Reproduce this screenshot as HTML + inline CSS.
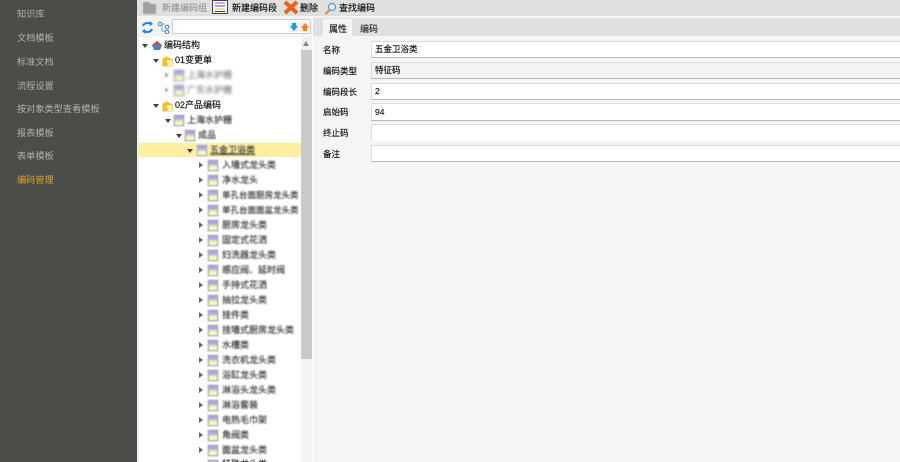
<!DOCTYPE html>
<html><head><meta charset="utf-8">
<style>
html,body{margin:0;padding:0;width:900px;height:462px;overflow:hidden;background:#f5f5f5}
body{position:relative;font-family:"Liberation Sans","Noto Sans CJK SC",sans-serif;font-size:9px;color:#111}
.a{position:absolute}
.t{position:absolute;white-space:nowrap;line-height:12px;-webkit-text-stroke:.15px currentColor}
.s{position:absolute;left:17px;color:#b0b1ac;font-size:9.2px;line-height:12px;white-space:nowrap;filter:blur(.3px)}
.ic{position:absolute;width:10px;height:11px;background:linear-gradient(#b890ec 0,#a8b4f4 35%,#f8f4a0 60%,#fbfbd8 100%);border:1px solid #aaa;box-sizing:border-box;outline:1px solid #e4e4e4;filter:blur(.6px)}
.ar{position:absolute;width:0;height:0;border-left:4px solid #666;border-top:3px solid transparent;border-bottom:3px solid transparent;filter:blur(.3px)}
.ad{position:absolute;width:0;height:0;border-top:4px solid #444;border-left:3px solid transparent;border-right:3px solid transparent;filter:blur(.2px)}
.m{color:#333;filter:blur(.7px)}
.f{position:absolute;left:371px;width:540px;height:17px;background:#fff;border:1px solid #dcdcdc;border-bottom:1px solid #b8b8b8;box-sizing:border-box;padding-left:3px;line-height:15px;font-size:8.5px;-webkit-text-stroke:.15px #111}
.l{position:absolute;left:323px;font-size:8.5px;line-height:12px;white-space:nowrap;-webkit-text-stroke:.15px #111}
</style></head><body>
<div class="a" style="left:0;top:0;width:137px;height:462px;background:#4b4d48"></div>
<div class="s" style="top:8px">知识库</div>
<div class="s" style="top:32px">文档模板</div>
<div class="s" style="top:56px">标准文档</div>
<div class="s" style="top:80px">流程设置</div>
<div class="s" style="top:103px">按对象类型查看模板</div>
<div class="s" style="top:127px">报表模板</div>
<div class="s" style="top:150px">表单模板</div>
<div class="s" style="top:174px;color:#d9a528">编码管理</div>

<div class="a" style="left:137px;top:0;width:763px;height:16px;background:#e0e0e0"></div>
<div class="a" style="left:137px;top:16px;width:763px;height:2px;background:#f4f4f4"></div>
<svg class="a" style="left:142px;top:1px;filter:blur(.5px)" width="16" height="14"><path d="M1 1h6l2 2h5v10H1z" fill="#a0a0a0"/></svg>
<div class="t" style="left:162px;top:2px;color:#9a9a9a;filter:blur(.3px)">新建编码组</div>
<svg class="a" style="left:212px;top:0" width="17" height="15"><rect x=".5" y=".5" width="15" height="13" fill="#fff" stroke="#444"/><path d="M3 3h10" stroke="#c040c0"/><path d="M3 6h10" stroke="#3050d0"/><path d="M3 9h10" stroke="#e0c020"/><path d="M3 11.500h10" stroke="#444"/></svg>
<div class="t" style="left:232px;top:2px">新建编码段</div>
<svg class="a" style="left:283px;top:0" width="16" height="15"><path d="M2 2L14 13M14 2L2 13" stroke="#e8641c" stroke-width="4"/></svg>
<div class="t" style="left:300px;top:2px">删除</div>
<svg class="a" style="left:324px;top:2px" width="13" height="13"><circle cx="8" cy="5" r="3.500" fill="#d8eefa" stroke="#4a90c0"/><path d="M5.500 8L1.500 12" stroke="#d89040" stroke-width="2"/></svg>
<div class="t" style="left:339px;top:2px">查找编码</div>

<div class="a" style="left:137px;top:18px;width:2px;height:444px;background:#f0f0f0"></div>
<div class="a" style="left:139px;top:18px;width:173px;height:19px;background:#f4f4f4"></div>
<svg class="a" style="left:141px;top:21px" width="13" height="13"><path d="M2 5C3 2 7 1 10 3M11 8C10 11 6 12 3 10" fill="none" stroke="#2080e0" stroke-width="2"/><path d="M9 0l3 3-3 2zM4 13l-3-3 3-2z" fill="#2080e0"/></svg>
<svg class="a" style="left:157px;top:21px" width="13" height="13"><circle cx="3" cy="3" r="1.800" fill="#fff" stroke="#3080c0"/><circle cx="10" cy="6" r="1.800" fill="#fff" stroke="#3080c0"/><circle cx="10" cy="11" r="1.800" fill="#fff" stroke="#3080c0"/><path d="M4 3h4M5 3v7h3" fill="none" stroke="#80a0c0"/></svg>
<div class="a" style="left:172px;top:19px;width:139px;height:15px;background:#fff;border:1px solid #ccc;border-radius:2px;box-sizing:border-box"></div>
<svg class="a" style="left:289px;top:22px" width="10" height="10"><rect width="10" height="10" fill="#e8f0f6"/><path d="M3 1h4v3h2L5 9 1 4h2z" fill="#1c9ae0"/></svg>
<svg class="a" style="left:300px;top:22px" width="10" height="10"><rect width="10" height="10" fill="#f8eee4"/><path d="M3 9h4V6h2L5 1 1 6h2z" fill="#f08020"/></svg>

<div class="a" style="left:139px;top:37px;width:162px;height:425px;background:#fff"></div>
<div class="a" style="left:301px;top:37px;width:11px;height:322px;background:#c9c9c9"></div>
<div class="a" style="left:301px;top:37px;width:11px;height:13px;background:#f0f0f0"></div>
<div class="a" style="left:303px;top:41px;width:0;height:0;border-bottom:5px solid #888;border-left:3px solid transparent;border-right:3px solid transparent"></div>
<div class="a" style="left:301px;top:359px;width:11px;height:103px;background:#f7f2f7"></div>
<div class="a" style="left:139px;top:143px;width:162px;height:14px;background:#fdeea0"></div>

<div class="ad" style="left:142px;top:44px"></div>
<svg class="a" style="left:151px;top:40px" width="12" height="11"><path d="M6 1l5 4-2 5H3L1 5z" fill="#4a80c0"/><path d="M6 1l5 4H1z" fill="#d05030"/></svg>
<div class="t" style="left:164px;top:39px">编码结构</div>
<div class="ad" style="left:153px;top:59px"></div>
<svg class="a" style="left:162px;top:55px" width="12" height="12"><path d="M1 3l4-2 3 2v1H1z" fill="#f6d050"/><path d="M1 4h9l1 7H1z" fill="#f6c428" stroke="#d89a10" stroke-width=".6"/><path d="M5 5h5l1 6H6z" fill="#fff2a8"/></svg>
<div class="t" style="left:175px;top:54px">01变更单</div>
<div class="ar" style="left:165px;top:72px;border-left-color:#bbb"></div>
<div class="ic" style="left:174px;top:70px;filter:blur(1px)"></div>
<div class="t" style="left:187px;top:69px;color:#888;filter:blur(1.2px)">上海水护栅</div>
<div class="ar" style="left:165px;top:87px;border-left-color:#bbb"></div>
<div class="ic" style="left:174px;top:85px;filter:blur(1px)"></div>
<div class="t" style="left:187px;top:84px;color:#888;filter:blur(1.2px)">广东水护栅</div>
<div class="ad" style="left:153px;top:104px"></div>
<svg class="a" style="left:162px;top:100px" width="12" height="12"><path d="M1 3l4-2 3 2v1H1z" fill="#f6d050"/><path d="M1 4h9l1 7H1z" fill="#f6c428" stroke="#d89a10" stroke-width=".6"/><path d="M5 5h5l1 6H6z" fill="#fff2a8"/></svg>
<div class="t" style="left:175px;top:99px">02产品编码</div>
<div class="ad" style="left:165px;top:119px"></div>
<div class="ic" style="left:174px;top:115px"></div>
<div class="t m" style="left:187px;top:114px">上海水护栅</div>
<div class="ad" style="left:176px;top:134px"></div>
<div class="ic" style="left:185px;top:130px"></div>
<div class="t m" style="left:198px;top:129px">成品</div>
<div class="ad" style="left:187px;top:149px"></div>
<div class="ic" style="left:197px;top:145px"></div>
<div class="t m" style="left:210px;top:144px;text-decoration:underline">五金卫浴类</div>

<div class="ar" style="left:199px;top:162px"></div><div class="ic" style="left:208px;top:160px"></div><div class="t m" style="left:222px;top:159px">入墙式龙头类</div>
<div class="ar" style="left:199px;top:177px"></div><div class="ic" style="left:208px;top:175px"></div><div class="t m" style="left:222px;top:174px">净水龙头</div>
<div class="ar" style="left:199px;top:192px"></div><div class="ic" style="left:208px;top:190px"></div><div class="t m" style="left:222px;top:189px;font-size:8.500px">单孔台面厨房龙头类</div>
<div class="ar" style="left:199px;top:207px"></div><div class="ic" style="left:208px;top:205px"></div><div class="t m" style="left:222px;top:204px;font-size:8.500px">单孔台面面盆龙头类</div>
<div class="ar" style="left:199px;top:222px"></div><div class="ic" style="left:208px;top:220px"></div><div class="t m" style="left:222px;top:219px">厨房龙头类</div>
<div class="ar" style="left:199px;top:237px"></div><div class="ic" style="left:208px;top:235px"></div><div class="t m" style="left:222px;top:234px">固定式花洒</div>
<div class="ar" style="left:199px;top:252px"></div><div class="ic" style="left:208px;top:250px"></div><div class="t m" style="left:222px;top:249px">妇洗器龙头类</div>
<div class="ar" style="left:199px;top:267px"></div><div class="ic" style="left:208px;top:265px"></div><div class="t m" style="left:222px;top:264px">感应阀、延时阀</div>
<div class="ar" style="left:199px;top:282px"></div><div class="ic" style="left:208px;top:280px"></div><div class="t m" style="left:222px;top:279px">手持式花洒</div>
<div class="ar" style="left:199px;top:297px"></div><div class="ic" style="left:208px;top:295px"></div><div class="t m" style="left:222px;top:294px">抽拉龙头类</div>
<div class="ar" style="left:199px;top:312px"></div><div class="ic" style="left:208px;top:310px"></div><div class="t m" style="left:222px;top:309px">挂件类</div>
<div class="ar" style="left:199px;top:327px"></div><div class="ic" style="left:208px;top:325px"></div><div class="t m" style="left:222px;top:324px">挂墙式厨房龙头类</div>
<div class="ar" style="left:199px;top:342px"></div><div class="ic" style="left:208px;top:340px"></div><div class="t m" style="left:222px;top:339px">水槽类</div>
<div class="ar" style="left:199px;top:357px"></div><div class="ic" style="left:208px;top:355px"></div><div class="t m" style="left:222px;top:354px">洗衣机龙头类</div>
<div class="ar" style="left:199px;top:372px"></div><div class="ic" style="left:208px;top:370px"></div><div class="t m" style="left:222px;top:369px">浴缸龙头类</div>
<div class="ar" style="left:199px;top:387px"></div><div class="ic" style="left:208px;top:385px"></div><div class="t m" style="left:222px;top:384px">淋浴头龙头类</div>
<div class="ar" style="left:199px;top:402px"></div><div class="ic" style="left:208px;top:400px"></div><div class="t m" style="left:222px;top:399px">淋浴套装</div>
<div class="ar" style="left:199px;top:417px"></div><div class="ic" style="left:208px;top:415px"></div><div class="t m" style="left:222px;top:414px">电热毛巾架</div>
<div class="ar" style="left:199px;top:432px"></div><div class="ic" style="left:208px;top:430px"></div><div class="t m" style="left:222px;top:429px">角阀类</div>
<div class="ar" style="left:199px;top:447px"></div><div class="ic" style="left:208px;top:445px"></div><div class="t m" style="left:222px;top:444px">面盆龙头类</div>
<div class="ic" style="left:208px;top:460px;background:#ccc;filter:none"></div><div class="t" style="left:222px;top:458px;color:#444">特殊龙头类</div>

<div class="a" style="left:312px;top:18px;width:1px;height:444px;background:#fff"></div>
<div class="a" style="left:313px;top:18px;width:587px;height:18px;background:#e0e0e0"></div>
<div class="a" style="left:323px;top:19px;width:29px;height:18px;background:#f5f5f5"></div>
<div class="t" style="left:329px;top:23px">属性</div>
<div class="t" style="left:360px;top:23px;color:#333">编码</div>

<div class="l" style="top:44px">名称</div><div class="f" style="top:41px">五金卫浴类</div>
<div class="l" style="top:65px">编码类型</div><div class="f" style="top:62px;background:#f3f3f3">特征码</div>
<div class="l" style="top:86px">编码段长</div><div class="f" style="top:83px">2</div>
<div class="l" style="top:106px">启始码</div><div class="f" style="top:103px;height:18px;padding-top:1px">94</div>
<div class="l" style="top:127px">终止码</div><div class="f" style="top:124px;border-bottom:0"></div>
<div class="l" style="top:148px">备注</div><div class="f" style="top:145px"></div>
</body></html>
